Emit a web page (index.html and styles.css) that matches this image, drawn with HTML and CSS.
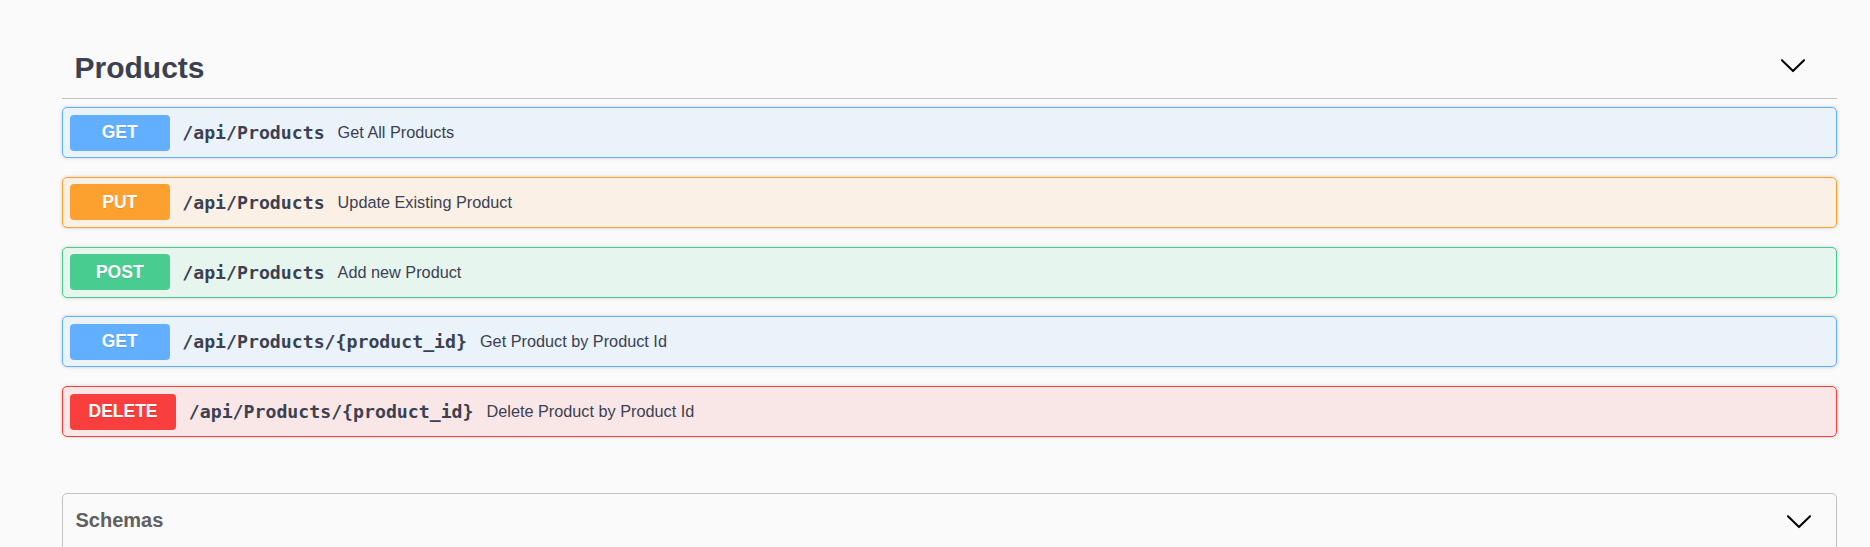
FILE: index.html
```html
<!DOCTYPE html>
<html lang="en">
<head>
<meta charset="utf-8">
<title>Products API</title>
<link rel="stylesheet" href="styles.css">
</head>
<body>
<div class="wrapper">
  <section class="tag-section">
    <h3 class="tag">
      <span class="tag-name">Products</span>
      <svg class="arrow tag-arrow" width="28" height="28" viewBox="0 0 20 20" aria-hidden="true"><path d="M17.418 6.109c.272-.268.709-.268.979 0s.271.701 0 .969l-7.908 7.83c-.27.268-.707.268-.979 0l-7.908-7.83c-.27-.268-.27-.701 0-.969.271-.268.709-.268.979 0L10 13.25l7.418-7.141z"/></svg>
    </h3>
    <div class="ops">
      <div class="opblock op-get">
        <span class="method">GET</span>
        <span class="path">/api/Products</span>
        <span class="desc">Get All Products</span>
      </div>
      <div class="opblock op-put">
        <span class="method">PUT</span>
        <span class="path">/api/Products</span>
        <span class="desc">Update Existing Product</span>
      </div>
      <div class="opblock op-post">
        <span class="method">POST</span>
        <span class="path">/api/Products</span>
        <span class="desc">Add new Product</span>
      </div>
      <div class="opblock op-get">
        <span class="method">GET</span>
        <span class="path">/api/Products/{product_id}</span>
        <span class="desc">Get Product by Product Id</span>
      </div>
      <div class="opblock op-delete">
        <span class="method">DELETE</span>
        <span class="path">/api/Products/{product_id}</span>
        <span class="desc">Delete Product by Product Id</span>
      </div>
    </div>
  </section>
  <section class="models">
    <h4 class="models-head">
      <span>Schemas</span>
      <svg class="arrow models-arrow" width="28" height="28" viewBox="0 0 20 20" aria-hidden="true"><path d="M17.418 6.109c.272-.268.709-.268.979 0s.271.701 0 .969l-7.908 7.83c-.27.268-.707.268-.979 0l-7.908-7.83c-.27-.268-.27-.701 0-.969.271-.268.709-.268.979 0L10 13.25l7.418-7.141z"/></svg>
    </h4>
    <div class="models-body"></div>
  </section>
</div>
</body>
</html>
```

FILE: styles.css
```css
html, body {
  margin: 0;
  padding: 0;
  background: #fafafa;
}

body {
  font-family: "Liberation Sans", Arial, sans-serif;
  color: #3b4151;
}

.wrapper {
  margin-left: 62px;
  width: 1775px;
  padding-top: 37px;
}

.tag {
  display: flex;
  align-items: center;
  justify-content: space-between;
  margin: 0;
  padding: 12.5px 30.5px 12.5px 12.5px;
  font-size: 30px;
  line-height: 36px;
  font-weight: bold;
  color: #3b4151;
  border-bottom: 1.25px solid rgba(59, 65, 81, 0.3);
}

.arrow {
  display: block;
  flex: none;
}

.arrow path {
  fill: #000;
}

.tag-arrow {
  margin-bottom: 5px;
}

.ops {
  display: flex;
  flex-direction: column;
  gap: 18.75px;
  margin-top: 8px;
}

.opblock {
  display: flex;
  align-items: center;
  height: 51px;
  box-sizing: border-box;
  padding: 6.25px 6.75px;
  border: 1.25px solid;
  border-radius: 5px;
  box-shadow: 0 0 3.75px rgba(0, 0, 0, 0.19);
}

.method {
  flex: none;
  box-sizing: border-box;
  min-width: 100px;
  height: 36px;
  padding: 0 18.75px;
  display: flex;
  align-items: center;
  justify-content: center;
  border-radius: 4px;
  color: #fff;
  font-size: 17.5px;
  font-weight: bold;
  text-shadow: 0 1.25px 0 rgba(0, 0, 0, 0.1);
}

.path {
  margin-left: 12.5px;
  font-family: "DejaVu Sans Mono", "Liberation Mono", monospace;
  font-weight: bold;
  font-size: 18.2px;
  color: #3b4151;
}

.desc {
  margin-left: 13px;
  font-size: 16.25px;
  color: #3b4151;
}

.op-get {
  border-color: #61affe;
  background: rgba(97, 175, 254, 0.1);
}
.op-get .method { background: #61affe; }

.op-put {
  border-color: #fca130;
  background: rgba(252, 161, 48, 0.1);
}
.op-put .method { background: #fca130; }

.op-post {
  border-color: #49cc90;
  background: rgba(73, 204, 144, 0.1);
}
.op-post .method { background: #49cc90; }

.op-delete {
  border-color: #f93e3e;
  background: rgba(249, 62, 62, 0.1);
}
.op-delete .method { background: #f93e3e; }

.models {
  margin-top: 56px;
  border: 1.25px solid rgba(59, 65, 81, 0.3);
  border-radius: 5px;
}

.models-head {
  display: flex;
  align-items: center;
  justify-content: space-between;
  margin: 0;
  padding: 12.5px 23.25px 12.5px 12.5px;
  font-size: 20px;
  line-height: 23px;
  font-weight: bold;
  color: #606060;
  border-bottom: 1.25px solid rgba(59, 65, 81, 0.3);
}

.models-body {
  height: 120px;
}
```
